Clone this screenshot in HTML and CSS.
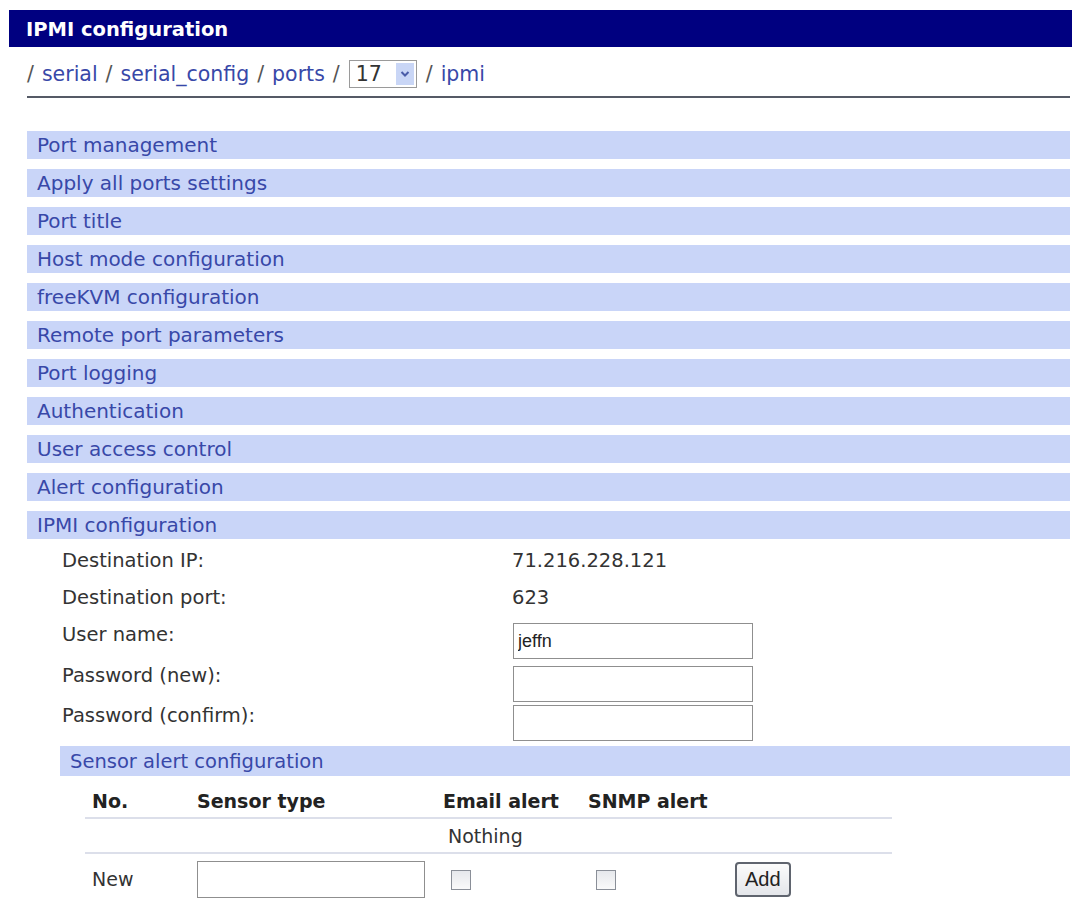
FILE: index.html
```html
<!DOCTYPE html>
<html lang="en">
<head>
  <meta charset="UTF-8" />
  <title>IPMI configuration</title>
  <link rel="stylesheet" href="styles.css">
</head>
<body>
  <div class="titlebar">IPMI configuration</div>

  <div class="crumbs">
    <span class="sep">/</span> <a href="#">serial</a>
    <span class="sep">/</span> <a href="#">serial_config</a>
    <span class="sep">/</span> <a href="#">ports</a>
    <span class="sep">/</span>
    <span class="select"><span class="select-val">17</span><span class="select-btn"><svg width="10" height="8" viewBox="0 0 10 8"><path d="M1.5 2 L5 5.5 L8.5 2" fill="none" stroke="#4a5ca8" stroke-width="2"/></svg></span></span>
    <span class="sep">/</span> <a href="#">ipmi</a>
  </div>

  <div class="menu">
    <div class="section">Port management</div>
    <div class="section">Apply all ports settings</div>
    <div class="section">Port title</div>
    <div class="section">Host mode configuration</div>
    <div class="section">freeKVM configuration</div>
    <div class="section">Remote port parameters</div>
    <div class="section">Port logging</div>
    <div class="section">Authentication</div>
    <div class="section">User access control</div>
    <div class="section">Alert configuration</div>
    <div class="section">IPMI configuration</div>
  </div>

  <div class="fields">
    <div class="field f-ip">
      <div class="label">Destination IP:</div>
      <div class="value">71.216.228.121</div>
    </div>
    <div class="field f-port">
      <div class="label">Destination port:</div>
      <div class="value">623</div>
    </div>
    <div class="field f-user">
      <div class="label">User name:</div>
      <div class="value"><input class="text" type="text" value="jeffn"></div>
    </div>
    <div class="field f-new">
      <div class="label">Password (new):</div>
      <div class="value"><input class="text" type="password"></div>
    </div>
    <div class="field f-confirm">
      <div class="label">Password (confirm):</div>
      <div class="value"><input class="text" type="password"></div>
    </div>
  </div>

  <div class="subsection">Sensor alert configuration</div>

  <table class="sensors">
    <thead>
      <tr>
        <th class="c-no">No.</th>
        <th class="c-type">Sensor type</th>
        <th class="c-email">Email alert</th>
        <th class="c-snmp">SNMP alert</th>
        <th class="c-act"></th>
      </tr>
    </thead>
    <tbody>
      <tr class="empty">
        <td></td>
        <td></td>
        <td colspan="3">Nothing</td>
      </tr>
      <tr class="new">
        <td>New</td>
        <td><input class="text sensor-type" type="text"></td>
        <td><span class="check"></span></td>
        <td><span class="check"></span></td>
        <td><button>Add</button></td>
      </tr>
    </tbody>
  </table>
</body>
</html>
```

FILE: styles.css
```css
body {
  margin: 0;
  font-family: "DejaVu Sans", Verdana, sans-serif;
  font-size: 19.5px;
  color: #333;
  background: #fff;
}
a {
  color: #3848a8;
  text-decoration: none;
}
.titlebar {
  margin: 10px 4px 0 9px;
  height: 37px;
  line-height: 39px;
  padding-left: 17px;
  background-color: #000080;
  color: #fff;
  font-weight: bold;
  font-size: 19.5px;
}
.crumbs {
  margin: 13px 6px 0 27px;
  height: 36px;
  border-bottom: 2px solid #555a66;
  display: flex;
  align-items: flex-start;
  gap: 8px;
  font-size: 20.5px;
}
.crumbs .sep {
  color: #555;
  line-height: 28px;
}
.crumbs a {
  line-height: 28px;
}
.select {
  display: flex;
  align-items: stretch;
  height: 28px;
  width: 68px;
  border: 1px solid #9a9a9a;
  box-sizing: border-box;
  margin: 0 1px;
}
.select-val {
  flex: 1;
  padding-left: 6px;
  line-height: 26px;
  color: #333;
}
.select-btn {
  width: 18px;
  margin: 2px;
  background: #c9d6f6;
  display: flex;
  align-items: center;
  justify-content: center;
}
.menu {
  margin: 33px 6px 0 27px;
  display: flex;
  flex-direction: column;
  gap: 10px;
  font-size: 20px;
}
.section {
  height: 28px;
  line-height: 29px;
  padding-left: 10px;
  background-color: #c9d5f8;
  color: #3848a8;
}
.fields {
  margin: 8px 0 0 62px;
  display: flex;
  flex-direction: column;
}
.field {
  display: grid;
  grid-template-columns: 450px 1fr;
  align-items: start;
}
.field .label,
.field .value {
  line-height: 24px;
}
.f-ip { height: 35px; padding-top: 2px; }
.f-port { height: 37px; padding-top: 2px; }
.f-user { height: 43px; }
.f-new { height: 39px; }
.f-new .label { margin-top: -2px; }
.f-confirm { height: 41px; }
.f-confirm .label { margin-top: -1px; }
.text {
  box-sizing: border-box;
  width: 240px;
  height: 36px;
  border: 1px solid #8f8f8f;
  padding: 0 4px;
  font-family: "Liberation Sans", Arial, sans-serif;
  font-size: 18px;
  color: #222;
  margin: 0 0 0 1px;
}
.subsection {
  margin: 0 6px 0 60px;
  height: 30px;
  line-height: 31px;
  padding-left: 10px;
  background-color: #c9d5f8;
  color: #3848a8;
}
.sensors {
  margin: 0 0 0 85px;
  border-collapse: collapse;
  width: 807px;
  font-size: 19px;
}
.sensors th {
  text-align: left;
  font-weight: bold;
  color: #222;
  height: 36px;
  line-height: 22px;
  padding: 0 0 5px 0;
  border-bottom: 2px solid #dcdfea;
  vertical-align: bottom;
}
.sensors td {
  padding: 0;
  vertical-align: middle;
}
.sensors th.c-no { width: 105px; padding-left: 7px; }
.c-type { width: 246px; }
.c-email { width: 145px; }
.c-snmp { width: 147px; }
.sensors tr.empty td {
  height: 33px;
  border-bottom: 2px solid #dcdfea;
  padding-left: 5px;
}
.sensors tr.new td {
  height: 50px;
}
.sensors tr.new td:first-child {
  padding-left: 7px;
}
.sensor-type {
  width: 228px;
  height: 37px;
  margin-left: 0;
}
.check {
  display: inline-block;
  width: 18px;
  height: 18px;
  border: 1px solid #8a8f98;
  background: linear-gradient(#e6e8ec, #fafafa);
  margin-left: 8px;
  vertical-align: middle;
}
button {
  font-family: "Liberation Sans", Arial, sans-serif;
  font-size: 20px;
  color: #222;
  height: 35px;
  padding: 0 8px;
  border: 2px solid #5f646e;
  border-radius: 4px;
  background: linear-gradient(#fbfbfb, #e4e6ea);
  margin-left: 0;
}
```
